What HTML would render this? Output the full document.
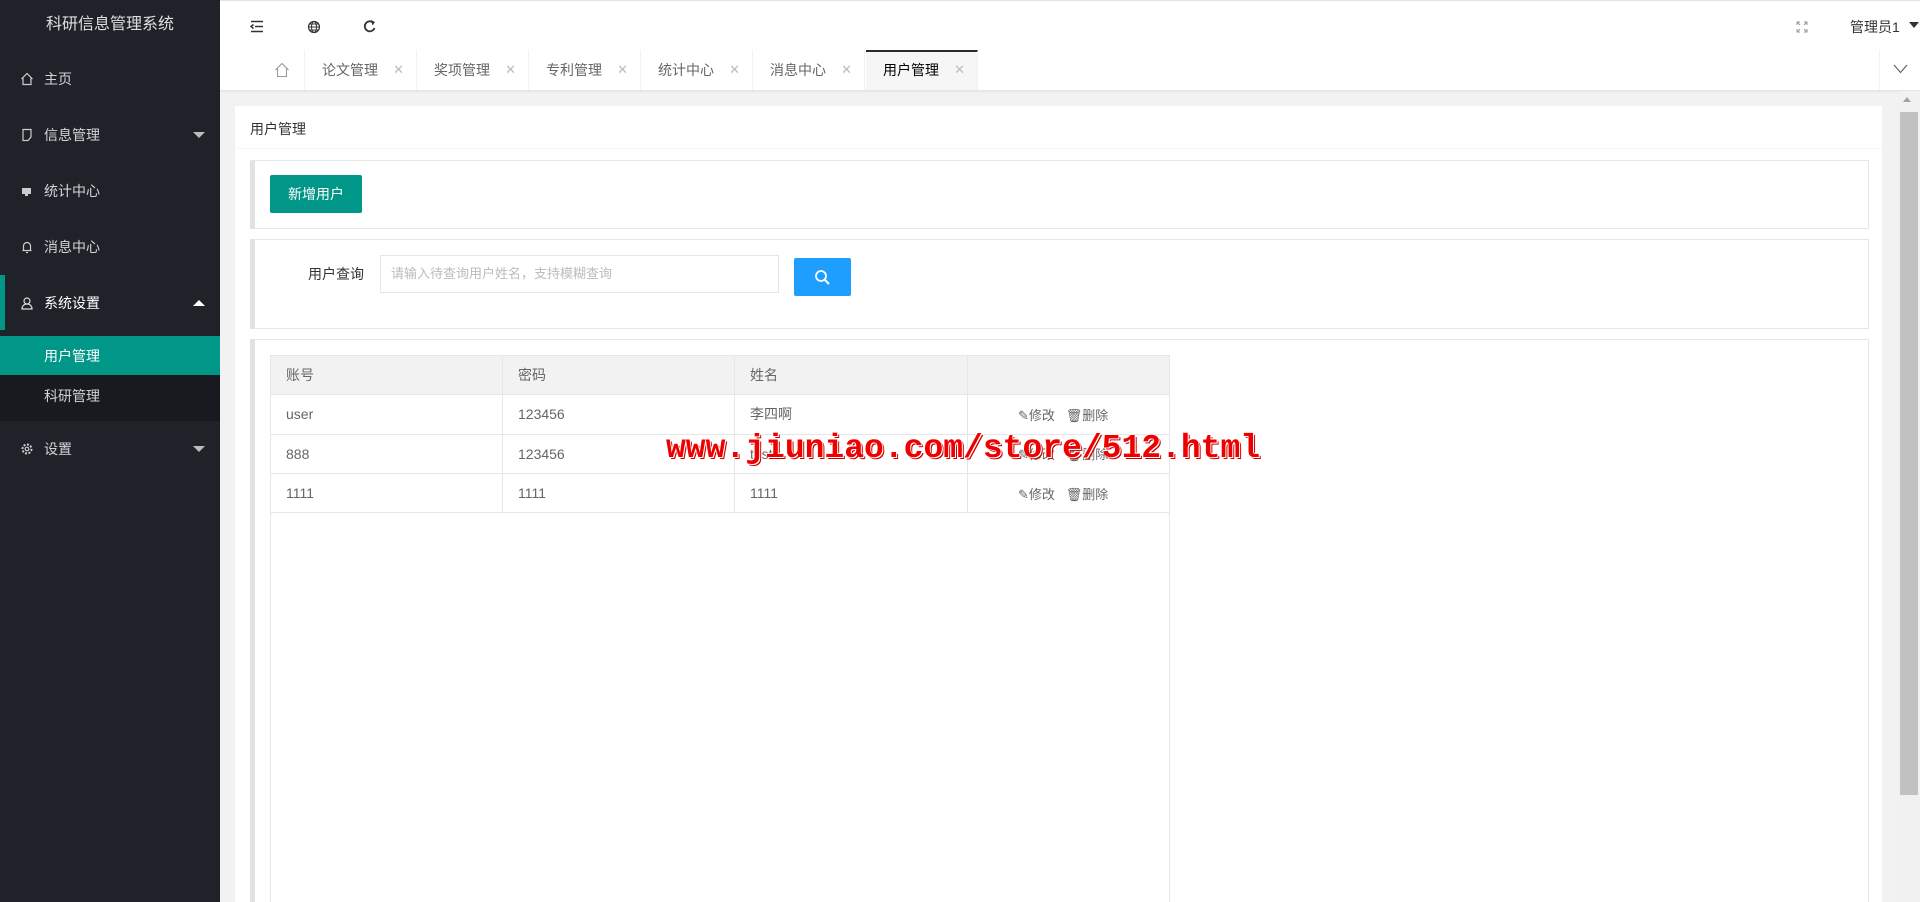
<!DOCTYPE html>
<html><head><meta charset="utf-8"><style>
*{margin:0;padding:0;box-sizing:border-box}
html{width:1920px;height:902px;overflow:hidden}
body{width:1920px;height:902px;overflow:hidden;background:#f2f2f2;font-family:"Liberation Sans","Noto Sans CJK SC",sans-serif;font-size:14px;color:#333;position:relative}
.abs{position:absolute}
#side{left:0;top:0;width:220px;height:902px;background:#20222a}
#logo{left:0;top:0;width:220px;height:50px;background:#20222a;font-size:16px;line-height:50px;text-align:center;color:rgba(255,255,255,.85)}
.mi{position:absolute;left:0;width:220px;color:rgba(255,255,255,.8);font-size:14px;line-height:20px}
.mi .ic{position:absolute;left:20px;top:3px;width:14px;height:14px}
.mi span{position:absolute;left:44px}
.arr{position:absolute;right:15px;top:7px;width:0;height:0;border-left:6px solid transparent;border-right:6px solid transparent}
#head{left:220px;top:0;width:1700px;height:50px;background:#fff;border-top:1px solid #e2e2e2}
#tabs{left:220px;top:50px;width:1700px;height:41px;background:#fff;border-bottom:1px solid #e6e6e6;box-shadow:0 1px 2px rgba(0,0,0,.06)}
.tab{position:absolute;top:0;height:40px;width:112px;border-right:1px solid #f2f2f2;line-height:40px;font-size:14px;color:#666;padding-left:17px}
.tab i{position:absolute;right:12px;font-style:normal;color:#bbb;font-size:13px}
#card{left:235px;top:106px;width:1647px;height:796px;background:#fff}
.box{position:absolute;left:250px;width:1619px;border:1px solid #e6e6e6;border-left:5px solid #e2e2e2;background:#fff}
table{border-collapse:collapse;position:absolute;left:270px;top:355px;width:900px}
td,th{border:1px solid #e6e6e6;height:39.3px;padding-left:15px;text-align:left;font-weight:normal;font-size:14px;color:#666}
th{background:#f2f2f2}
.op{font-size:13px;color:#666;text-align:left;padding-left:50px}
</style></head><body>
<div id="side" class="abs">
<div id="logo" class="abs">科研信息管理系统</div>
<div class="mi" style="top:69px"><svg class="ic" viewBox="0 0 14 14"><path d="M1.5 7L7 1.5 12.5 7M3 5.5V12.5H11V5.5" fill="none" stroke="#ccc" stroke-width="1.2"/></svg><span>主页</span></div>
<div class="mi" style="top:125px"><svg class="ic" viewBox="0 0 14 14"><path d="M3 1.5H11V9L8 12.5H3Z" fill="none" stroke="#ccc" stroke-width="1.2"/></svg><span>信息管理</span><div class="arr" style="border-top:6px solid #bbb"></div></div>
<div class="mi" style="top:181px"><svg class="ic" viewBox="0 0 14 14"><rect x="2" y="4" width="9" height="6" fill="#ccc"/><rect x="5" y="10" width="3" height="2" fill="#ccc"/></svg><span>统计中心</span></div>
<div class="mi" style="top:237px"><svg class="ic" viewBox="0 0 14 14"><path d="M3.5 10.5V6a3.5 3.5 0 0 1 7 0v4.5H2.5h9M6 12.5h2" fill="none" stroke="#ccc" stroke-width="1.2"/></svg><span>消息中心</span></div>
<div class="abs" style="left:0;top:275px;width:220px;height:55px;background:#20222a;border-left:5px solid #009688"></div>
<div class="mi" style="top:293px;color:#fff"><svg class="ic" viewBox="0 0 14 14"><circle cx="7" cy="5" r="3" fill="none" stroke="#ddd" stroke-width="1.2"/><path d="M2 13c0-3 2-5 5-5s5 2 5 5z" fill="none" stroke="#ddd" stroke-width="1.2"/></svg><span>系统设置</span><div class="arr" style="border-bottom:6px solid #fff"></div></div>
<div class="abs" style="left:0;top:336px;width:220px;height:85px;background:#181a1f"></div>
<div class="abs" style="left:0;top:336px;width:220px;height:39px;background:#009688"></div>
<div class="mi" style="top:346px;color:#fff"><span>用户管理</span></div>
<div class="mi" style="top:386px"><span>科研管理</span></div>
<div class="mi" style="top:439px"><svg class="ic" viewBox="0 0 14 14"><circle cx="7" cy="7" r="4.5" fill="none" stroke="#ccc" stroke-width="2" stroke-dasharray="2 1.5"/><circle cx="7" cy="7" r="1.8" fill="none" stroke="#ccc" stroke-width="1.2"/></svg><span>设置</span><div class="arr" style="border-top:6px solid #bbb"></div></div>
</div>
<div id="head" class="abs">
<svg class="abs" style="left:30px;top:19px" width="14" height="13" viewBox="0 0 14 13"><path d="M1 1.5H13M5 6.5H13M1 11.5H13M3.5 4.5L1 6.5 3.5 8.5" fill="none" stroke="#333" stroke-width="1.5"/></svg>
<svg class="abs" style="left:87px;top:19px" width="14" height="14" viewBox="0 0 14 14"><circle cx="7" cy="7" r="5.5" fill="none" stroke="#333" stroke-width="1.2"/><ellipse cx="7" cy="7" rx="2.5" ry="5.5" fill="none" stroke="#333"/><path d="M1.5 7H12.5M2.5 4H11.5M2.5 10H11.5" stroke="#333"/></svg>
<svg class="abs" style="left:143px;top:18px" width="14" height="15" viewBox="0 0 14 15"><path d="M11.5 9A5 5 0 1 1 10 3.5" fill="none" stroke="#333" stroke-width="1.8"/><path d="M8 1L12 3 9.5 6.5z" fill="#333"/></svg>
<svg class="abs" style="left:1576px;top:20px" width="12" height="12" viewBox="0 0 12 12"><path d="M1 4V1H4M8 1H11V4M11 8V11H8M4 11H1V8M1 1L4 4M11 1L8 4M11 11L8 8M1 11L4 8" fill="none" stroke="#999"/></svg>
<div class="abs" style="left:1630px;top:16px;font-size:14px;color:#333">管理员1</div>
<div class="abs" style="left:1689px;top:21px;border-left:5px solid transparent;border-right:5px solid transparent;border-top:6px solid #333"></div>
</div>
<div id="tabs" class="abs">
<div class="tab" style="left:0;width:85px"><svg class="abs" style="left:54px;top:12px" width="16" height="16" viewBox="0 0 16 16"><path d="M1.5 8L8 1.5 14.5 8M3.5 6.5V14.5H12.5V6.5" fill="none" stroke="#999" stroke-width="1.1"/></svg></div>
<div class="tab" style="left:85px">论文管理<i>✕</i></div>
<div class="tab" style="left:197px">奖项管理<i>✕</i></div>
<div class="tab" style="left:309px">专利管理<i>✕</i></div>
<div class="tab" style="left:421px">统计中心<i>✕</i></div>
<div class="tab" style="left:533px">消息中心<i>✕</i></div>
<div class="tab" style="left:646px;background:#f6f6f6;color:#000;border-top:2px solid #292b34;line-height:36px">用户管理<i>✕</i></div>
<div class="abs" style="left:1659px;top:0;width:41px;height:40px;border-left:1px solid #f2f2f2"><svg class="abs" style="left:13px;top:14px" width="15" height="10" viewBox="0 0 15 10"><path d="M1 1L7.5 8.5 14 1" fill="none" stroke="#666" stroke-width="1.2"/></svg></div>
</div>
<div id="card" class="abs"><div class="abs" style="left:15px;top:13px;font-size:14px;color:#333">用户管理</div><div class="abs" style="left:0;top:42px;width:1647px;height:1px;background:#f6f6f6"></div></div>
<div class="box" style="top:160px;height:69px"></div>
<div class="abs" style="left:270px;top:175px;width:92px;height:38px;background:#009688;color:#fff;line-height:38px;text-align:center;font-size:14px;border-radius:2px">新增用户</div>
<div class="box" style="top:239px;height:90px"></div>
<div class="abs" style="left:308px;top:264px;font-size:14px;color:#333">用户查询</div>
<div class="abs" style="left:380px;top:255px;width:399px;height:38px;border:1px solid #e6e6e6;padding-left:10px;line-height:36px;color:#bbb;font-size:13px">请输入待查询用户姓名，支持模糊查询</div>
<div class="abs" style="left:794px;top:258px;width:57px;height:38px;background:#1e9fff;border-radius:2px"><svg class="abs" style="left:20px;top:11px" width="17" height="17" viewBox="0 0 17 17"><circle cx="7" cy="7" r="5" fill="none" stroke="#fff" stroke-width="1.8"/><path d="M10.5 10.5L15 15" stroke="#fff" stroke-width="2"/></svg></div>
<div class="box" style="top:339px;height:563px;border-bottom:none"></div>
<table>
<tr><th style="width:232px">账号</th><th style="width:232px">密码</th><th style="width:233px">姓名</th><th></th></tr>
<tr><td>user</td><td>123456</td><td>李四啊</td><td class="op">✎修改 &nbsp; 🗑删除</td></tr>
<tr><td>888</td><td>123456</td><td>test</td><td class="op">✎修改 &nbsp; 🗑删除</td></tr>
<tr><td>1111</td><td>1111</td><td>1111</td><td class="op">✎修改 &nbsp; 🗑删除</td></tr>
</table>
<div class="abs" style="left:270px;top:512px;width:900px;height:390px;border:1px solid #e6e6e6;border-top:none;border-bottom:none"></div>
<div class="abs" style="left:666px;top:430px;font-family:'Liberation Mono',monospace;font-weight:bold;font-size:33px;color:#e00;text-shadow:1px 1px 0 #fff,-1px -1px 0 #fff,2px 2px 0 #c00">www.jiuniao.com/store/512.html</div>
<div class="abs" style="left:1898px;top:91px;width:22px;height:811px;background:#f1f1f1"></div>
<div class="abs" style="left:1903px;top:97px;border-left:4px solid transparent;border-right:4px solid transparent;border-bottom:5px solid #a3a3a3"></div>
<div class="abs" style="left:1900px;top:112px;width:18px;height:683px;background:#c1c1c1"></div>
</body></html>
